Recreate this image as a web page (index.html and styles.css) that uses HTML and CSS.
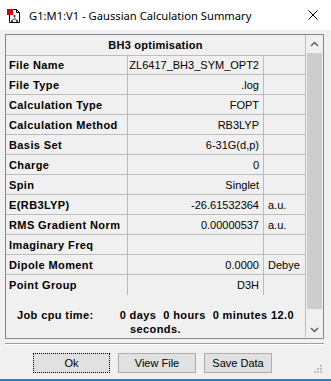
FILE: index.html
```html
<!DOCTYPE html>
<html lang="en">

<head>
    <meta charset="UTF-8">
    <meta name="viewport" content="width=device-width, initial-scale=1.0">
    <title>G1:M1:V1 - Gaussian Calculation Summary</title>
    <link rel="stylesheet" href="styles.css">
</head>

<body>
    <div class="window">
        <!-- title bar -->
        <div class="titlebar">
            <svg class="app-icon" width="14" height="15" viewBox="0 0 14 15">
                <path d="M2.5 1.5 H9.5 L12.5 4.5 V14.5 H2.5 Z" fill="#fff" stroke="#000"/>
                <path d="M9.5 1.5 V4.5 H12.5" fill="none" stroke="#000"/>
                <rect x="0" y="1" width="6" height="6" fill="#e00000"/>
                <path d="M7.5 8 V10.5 L5 12.5 M7.5 10.5 L10 12.5" fill="none" stroke="#777" stroke-width="1.2"/>
                <rect x="6.5" y="7" width="2" height="2" fill="#555"/>
                <rect x="4" y="12" width="2" height="2" fill="#555"/>
                <rect x="9" y="12" width="2" height="2" fill="#555"/>
            </svg>
            <span class="title">G1:M1:V1 - Gaussian Calculation Summary</span>
            <svg class="close" width="10" height="10" viewBox="0 0 10 10">
                <path d="M0.5 0.5 L9.5 9.5 M9.5 0.5 L0.5 9.5" stroke="#000" stroke-width="1"/>
            </svg>
        </div>

        <div class="content">
            <div class="panel">
                <div class="grid">
                    <div class="head">BH3 optimisation</div>

                    <div class="cell label">File Name</div>
                    <div class="cell value">ZL6417_BH3_SYM_OPT2</div>
                    <div class="cell unit"></div>

                    <div class="cell label">File Type</div>
                    <div class="cell value">.log</div>
                    <div class="cell unit"></div>

                    <div class="cell label">Calculation Type</div>
                    <div class="cell value">FOPT</div>
                    <div class="cell unit"></div>

                    <div class="cell label">Calculation Method</div>
                    <div class="cell value">RB3LYP</div>
                    <div class="cell unit"></div>

                    <div class="cell label">Basis Set</div>
                    <div class="cell value">6-31G(d,p)</div>
                    <div class="cell unit"></div>

                    <div class="cell label">Charge</div>
                    <div class="cell value">0</div>
                    <div class="cell unit"></div>

                    <div class="cell label">Spin</div>
                    <div class="cell value">Singlet</div>
                    <div class="cell unit"></div>

                    <div class="cell label">E(RB3LYP)</div>
                    <div class="cell value">-26.61532364</div>
                    <div class="cell unit">a.u.</div>

                    <div class="cell label">RMS Gradient Norm</div>
                    <div class="cell value">0.00000537</div>
                    <div class="cell unit">a.u.</div>

                    <div class="cell label">Imaginary Freq</div>
                    <div class="cell value"></div>
                    <div class="cell unit"></div>

                    <div class="cell label">Dipole Moment</div>
                    <div class="cell value">0.0000</div>
                    <div class="cell unit">Debye</div>

                    <div class="cell label last">Point Group</div>
                    <div class="cell value last">D3H</div>
                    <div class="cell unit last"></div>

                    <div class="cpu"><span class="cpu-label">Job cpu time:</span>0 days  0 hours  0 minutes 12.0<br>seconds.</div>
                </div>

                <!-- vertical scrollbar -->
                <div class="scrollbar">
                    <div class="arrow">
                        <svg width="9" height="6" viewBox="0 0 9 6"><path d="M1 5 L4.5 1.5 L8 5" fill="none" stroke="#606060" stroke-width="1.5"/></svg>
                    </div>
                    <div class="track">
                        <div class="thumb"></div>
                    </div>
                    <div class="arrow">
                        <svg width="9" height="6" viewBox="0 0 9 6"><path d="M1 1 L4.5 4.5 L8 1" fill="none" stroke="#606060" stroke-width="1.5"/></svg>
                    </div>
                </div>
            </div>

            <div class="separator"></div>

            <div class="buttons">
                <button class="btn btn-ok">Ok</button>
                <button class="btn btn-view">View File</button>
                <button class="btn btn-save">Save Data</button>
            </div>

            <svg class="grip" width="9" height="9" viewBox="0 0 9 9">
                <rect x="7" y="1" width="2" height="2" fill="#bdbdbd"/>
                <rect x="4" y="4" width="2" height="2" fill="#bdbdbd"/>
                <rect x="7" y="4" width="2" height="2" fill="#bdbdbd"/>
                <rect x="1" y="7" width="2" height="2" fill="#bdbdbd"/>
                <rect x="4" y="7" width="2" height="2" fill="#bdbdbd"/>
                <rect x="7" y="7" width="2" height="2" fill="#bdbdbd"/>
            </svg>
        </div>
    </div>
</body>

</html>
```

FILE: styles.css
```css
body {
    margin: 0;
    padding: 0;
    font-family: "Liberation Sans", Arial, sans-serif;
    font-size: 11px;
    color: #000;
    background-color: #f0f0f0;
}

.window {
    width: 331px;
    height: 381px;
    box-sizing: border-box;
    border-bottom: 2px solid #1883d7;
    background-color: #f0f0f0;
    overflow: hidden;
}

/* title bar */
.titlebar {
    height: 30px;
    background-color: #fff;
    display: flex;
    align-items: center;
    padding-left: 7px;
}

.title {
    margin-left: 8px;
    font-family: "Noto Sans", sans-serif;
    font-size: 11.2px;
    color: #000;
}

.close {
    margin-left: auto;
    margin-right: 13px;
}

/* main area */
.content {
    padding: 4px 0 0 5px;
    position: relative;
    height: 347px;
    box-sizing: border-box;
}

.panel {
    width: 319px;
    height: 305px;
    box-sizing: border-box;
    border: 1px solid #828790;
    display: flex;
}

.grid {
    width: 300px;
    display: grid;
    grid-template-columns: 122px 136px 42px;
    grid-auto-rows: 20px;
}

.head {
    grid-column: 1 / 4;
    height: 21px;
    box-sizing: border-box;
    border-bottom: 1px solid #bcbcbc;
    border-right: 1px solid #bcbcbc;
    text-align: center;
    font-weight: bold;
    letter-spacing: 0.25px;
    line-height: 21px;
}

.cell {
    box-sizing: border-box;
    border-right: 1px solid #bcbcbc;
    border-bottom: 1px solid #bcbcbc;
    line-height: 20px;
    white-space: nowrap;
    overflow: hidden;
}

.cell.last {
    border-bottom: none;
}

.label {
    font-weight: bold;
    letter-spacing: 0.4px;
    padding-left: 3px;
}

.value {
    text-align: right;
    padding-right: 4px;
}

.unit {
    padding-left: 4px;
}

.cpu {
    grid-column: 1 / 4;
    height: 42px;
    box-sizing: border-box;
    border-right: 1px solid #bcbcbc;
    padding-top: 13px;
    text-align: center;
    font-weight: bold;
    letter-spacing: 0.4px;
    line-height: 14px;
    white-space: pre;
}

.cpu-label {
    margin-right: 26px;
}

/* scrollbar */
.scrollbar {
    width: 17px;
    display: flex;
    flex-direction: column;
}

.arrow {
    height: 17px;
    display: flex;
    align-items: center;
    justify-content: center;
}

.track {
    flex: 1;
    padding: 1px 1px 0 1px;
}

.thumb {
    height: 256px;
    background-color: #cdcdcd;
}

/* bottom */
.separator {
    width: 319px;
    height: 1px;
    margin-top: 4px;
    background-color: #a0a0a0;
    border-bottom: 1px solid #fff;
}

.buttons {
    display: flex;
    gap: 8px;
    margin-top: 8px;
    padding-left: 28px;
}

.btn {
    height: 20px;
    box-sizing: border-box;
    background-color: #e1e1e1;
    border: 1px solid #adadad;
    font-family: "Liberation Sans", Arial, sans-serif;
    font-size: 11px;
    color: #000;
    padding: 0;
}

.btn-ok {
    width: 77px;
    border: 1px dotted #000;
}

.btn-view {
    width: 78px;
}

.btn-save {
    width: 68px;
}

.grip {
    position: absolute;
    right: 9px;
    bottom: 4px;
}
```
